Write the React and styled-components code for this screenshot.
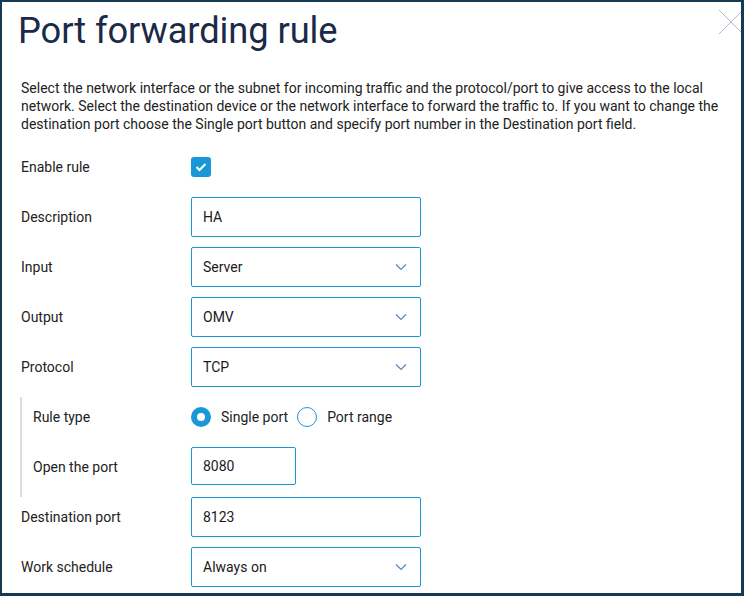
import React from "react";
import styled, { createGlobalStyle } from "styled-components";

const Global = createGlobalStyle`
  html, body { margin: 0; padding: 0; background: #fff; }
  body { font-family: Roboto, "Liberation Sans", sans-serif; }
  * { box-sizing: border-box; }
`;

const Frame = styled.div`
  position: relative;
  width: 744px;
  height: 596px;
  border-style: solid;
  border-color: #163a52;
  border-width: 2px 3px 3px 2px;
  background: #fff;
  overflow: hidden;
  padding: 0 19px;
`;

const Title = styled.h1`
  margin: 0 0 0 -3px;
  padding-top: 8px;
  font-size: 36.3px;
  font-weight: 400;
  line-height: 42px;
  color: #1b2a48;
  letter-spacing: -0.1px;
`;

const Intro = styled.p`
  margin: 27px 0 0;
  font-size: 14px;
  line-height: 18px;
  color: #222;
`;

const Form = styled.div`
  display: flex;
  flex-direction: column;
  margin-top: 14px;
`;

const Row = styled.div`
  display: flex;
  align-items: center;
  height: 50px;
  padding-bottom: 10px;
`;

const Label = styled.div`
  width: ${(p) => (p.$nested ? 158 : 170)}px;
  flex: none;
  font-size: 14px;
  color: #222;
`;

const Group = styled.div`
  margin-left: -1px;
  padding-left: 11px;
  border-left: 2px solid #dadde3;
  display: flex;
  flex-direction: column;
`;

const Field = styled.div`
  position: relative;
  width: ${(p) => p.$w || 230}px;
  height: ${(p) => p.$h || 40}px;
  align-self: flex-start;
  border: 1px solid #1a98d5;
  border-radius: 2px;
  display: flex;
  align-items: center;
  padding: 0 11px;
  font-size: 14px;
  color: #1a1a1a;
  background: #fff;
`;

const Value = styled.span`
  flex: 1;
`;

const Chevron = () => (
  <svg width="12" height="8" viewBox="0 0 12 8" style={{ marginRight: 2 }}>
    <path d="M1 1.5 L6 6.5 L11 1.5" fill="none" stroke="#5b86b8" strokeWidth="1.2" />
  </svg>
);

const Check = styled.div`
  width: 20px;
  height: 20px;
  border-radius: 3px;
  background: #1a98d5;
  display: flex;
  align-items: center;
  justify-content: center;
`;

const Radios = styled.div`
  display: flex;
  align-items: center;
  gap: 10px;
  font-size: 14px;
  color: #222;
`;

const RadioItem = styled.label`
  display: flex;
  align-items: center;
  gap: 10px;
  margin-right: ${(p) => (p.$last ? 0 : -1)}px;
`;

const Radio = styled.span`
  width: 20px;
  height: 20px;
  border-radius: 50%;
  border: ${(p) => (p.$on ? "6px" : "1px")} solid #1a98d5;
  background: #fff;
  display: inline-block;
`;

const Close = styled.div`
  position: absolute;
  top: 7px;
  right: -3px;
  width: 26px;
  height: 26px;
`;

const Select = ({ value }) => (
  <Field>
    <Value>{value}</Value>
    <Chevron />
  </Field>
);

export default function App() {
  return (
    <>
      <Global />
      <Frame>
        <Close>
          <svg width="26" height="26" viewBox="0 0 26 26">
            <path d="M1 1 L25 25 M25 1 L1 25" stroke="#b3bac8" strokeWidth="1" fill="none" />
          </svg>
        </Close>
        <Title>Port forwarding rule</Title>
        <Intro>
          Select the network interface or the subnet for incoming traffic and the protocol/port to give access to the local
          network. Select the destination device or the network interface to forward the traffic to. If you want to change the
          destination port choose the Single port button and specify port number in the Destination port field.
        </Intro>
        <Form>
          <Row>
            <Label>Enable rule</Label>
            <Check>
              <svg width="12" height="10" viewBox="0 0 12 10">
                <path d="M1.5 5 L4.5 8 L10.5 2" fill="none" stroke="#fff" strokeWidth="2" />
              </svg>
            </Check>
          </Row>
          <Row>
            <Label>Description</Label>
            <Field><Value>HA</Value></Field>
          </Row>
          <Row>
            <Label>Input</Label>
            <Select value="Server" />
          </Row>
          <Row>
            <Label>Output</Label>
            <Select value="OMV" />
          </Row>
          <Row>
            <Label>Protocol</Label>
            <Select value="TCP" />
          </Row>
          <Group>
            <Row>
              <Label $nested>Rule type</Label>
              <Radios>
                <RadioItem><Radio $on />Single port</RadioItem>
                <RadioItem $last><Radio />Port range</RadioItem>
              </Radios>
            </Row>
            <Row>
              <Label $nested>Open the port</Label>
              <Field $w={105} $h={38}><Value>8080</Value></Field>
            </Row>
          </Group>
          <Row>
            <Label>Destination port</Label>
            <Field><Value>8123</Value></Field>
          </Row>
          <Row>
            <Label>Work schedule</Label>
            <Select value="Always on" />
          </Row>
        </Form>
      </Frame>
    </>
  );
}
